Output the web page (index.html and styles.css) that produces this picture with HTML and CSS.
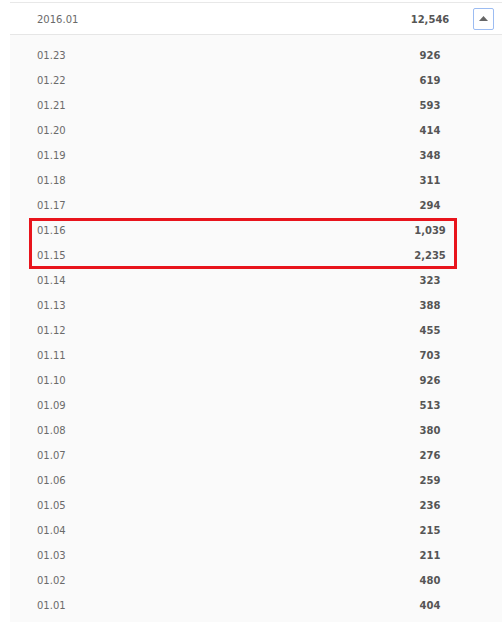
FILE: index.html
```html
<!DOCTYPE html>
<html>
<head>
<meta charset="utf-8">
<link rel="stylesheet" href="styles.css">
</head>
<body>
<div class="panel">
  <div class="head">
    <span class="date">2016.01</span>
    <span class="val">12,546</span>
    <button class="toggle" type="button" aria-label="collapse">
      <svg width="9" height="5" viewBox="0 0 9 5"><path d="M0 5 L4.5 0 L9 5 Z" fill="#666"/></svg>
    </button>
  </div>
  <div class="list">
    <div class="row"><span class="date">01.23</span><span class="val">926</span></div>
    <div class="row"><span class="date">01.22</span><span class="val">619</span></div>
    <div class="row"><span class="date">01.21</span><span class="val">593</span></div>
    <div class="row"><span class="date">01.20</span><span class="val">414</span></div>
    <div class="row"><span class="date">01.19</span><span class="val">348</span></div>
    <div class="row"><span class="date">01.18</span><span class="val">311</span></div>
    <div class="row"><span class="date">01.17</span><span class="val">294</span></div>
    <div class="mark">
      <div class="row"><span class="date">01.16</span><span class="val">1,039</span></div>
      <div class="row"><span class="date">01.15</span><span class="val">2,235</span></div>
    </div>
    <div class="row"><span class="date">01.14</span><span class="val">323</span></div>
    <div class="row"><span class="date">01.13</span><span class="val">388</span></div>
    <div class="row"><span class="date">01.12</span><span class="val">455</span></div>
    <div class="row"><span class="date">01.11</span><span class="val">703</span></div>
    <div class="row"><span class="date">01.10</span><span class="val">926</span></div>
    <div class="row"><span class="date">01.09</span><span class="val">513</span></div>
    <div class="row"><span class="date">01.08</span><span class="val">380</span></div>
    <div class="row"><span class="date">01.07</span><span class="val">276</span></div>
    <div class="row"><span class="date">01.06</span><span class="val">259</span></div>
    <div class="row"><span class="date">01.05</span><span class="val">236</span></div>
    <div class="row"><span class="date">01.04</span><span class="val">215</span></div>
    <div class="row"><span class="date">01.03</span><span class="val">211</span></div>
    <div class="row"><span class="date">01.02</span><span class="val">480</span></div>
    <div class="row"><span class="date">01.01</span><span class="val">404</span></div>
  </div>
</div>
</body>
</html>
```
FILE: styles.css
```css
html, body {
  margin: 0;
  padding: 0;
  background: #fff;
}
body {
  padding-top: 2px;
  font-family: "DejaVu Sans", Verdana, sans-serif;
  font-size: 10px;
}
.panel {
  margin-left: 10px;
  border-top: 1px solid #e8e8e8;
}
.head {
  display: grid;
  grid-template-columns: 1fr 80px 32px;
  align-items: center;
  height: 30px;
  padding: 1px 0 0 27px;
  background: #fff;
  border-bottom: 1px solid #e6e6e6;
}
.date {
  color: #6a6a6a;
}
.val {
  text-align: center;
  font-weight: bold;
  color: #555;
}
.toggle {
  box-sizing: border-box;
  width: 21px;
  height: 22px;
  margin: -1px 0 0 3px;
  padding: 0;
  border: 1px solid #9cbcf2;
  border-radius: 2px;
  background: #fff;
  display: flex;
  align-items: center;
  justify-content: center;
}
.toggle svg {
  display: block;
}
.list {
  background: #fafafa;
  padding: 8px 0 4px;
}
.row {
  display: grid;
  grid-template-columns: 1fr 80px 32px;
  align-items: center;
  height: 25px;
  padding-left: 27px;
}
.mark {
  position: relative;
}
.mark::after {
  content: "";
  position: absolute;
  left: 19px;
  top: 0;
  width: 428px;
  height: 51px;
  box-sizing: border-box;
  border: 3px solid #e8141c;
  pointer-events: none;
}
```
